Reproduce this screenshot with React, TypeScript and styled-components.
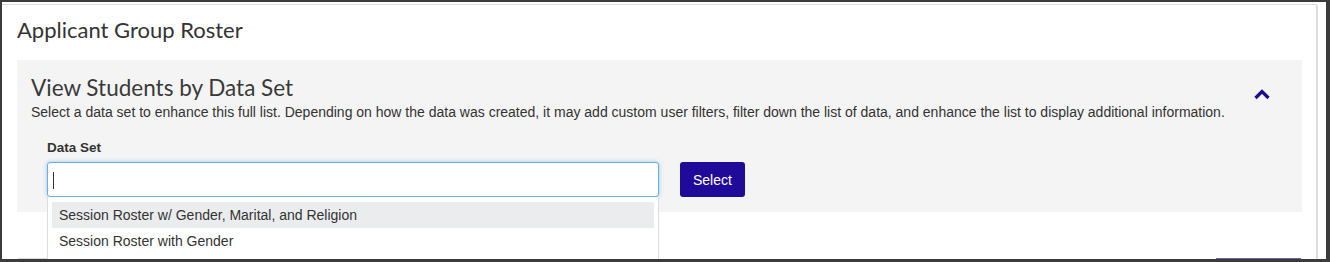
import React from "react";
import styled, { createGlobalStyle } from "styled-components";

const Global = createGlobalStyle`
  html, body { margin: 0; padding: 0; background: #3b3b3b; }
  body { font-family: "Liberation Sans", Arial, sans-serif; color: #333; }
`;

const Frame = styled.div`
  margin: 2px 4px 0 2px;
  height: 257px;
  background: #fff;
  overflow: hidden;
  padding-top: 2px;
  box-sizing: border-box;
`;

const Card = styled.section`
  width: 1316px;
  box-sizing: border-box;
  border-top: 1px solid #dcdcdc;
  border-right: 2px solid #dcdcdc;
  border-top-right-radius: 3px;
  padding: 10px 14px 0 15px;
  height: 300px;
`;

const Title = styled.h1`
  margin: 0;
  font-family: Lato, "Open Sans", sans-serif;
  font-weight: 400;
  font-size: 22px;
  line-height: 30px;
  color: #333;
`;

const Panel = styled.div`
  margin-top: 15px;
  background: #f4f4f4;
  padding: 13px 14px 15px 14px;
`;

const PanelHead = styled.div`
  display: flex;
  align-items: flex-start;
  justify-content: space-between;
`;

const PanelTitle = styled.h2`
  margin: 0;
  font-family: Lato, "Open Sans", sans-serif;
  font-weight: 400;
  font-size: 22.5px;
  line-height: 30px;
  color: #3a3a3a;
`;

const Toggle = styled.button`
  border: 0;
  background: none;
  padding: 0;
  margin: 16px 18px 0 0;
  width: 16px;
  height: 12px;
  display: flex;
  cursor: pointer;
`;

const Desc = styled.p`
  margin: 0;
  font-size: 14px;
  line-height: 18px;
  color: #333;
`;

const Group = styled.div`
  margin: 18px 0 0 16px;
`;

const Label = styled.label`
  display: block;
  font-weight: bold;
  font-size: 13.5px;
  line-height: 18px;
  color: #333;
  margin-bottom: 5px;
`;

const Row = styled.div`
  display: flex;
  align-items: center;
  gap: 21px;
`;

const ComboWrap = styled.div`
  position: relative;
  width: 612px;
`;

const Input = styled.div`
  box-sizing: border-box;
  height: 35px;
  border: 1px solid #66afe9;
  border-radius: 3px;
  background: #fff;
  box-shadow: 0 0 4px rgba(102, 175, 233, 0.6);
  padding: 9px 5px;
`;

const Caret = styled.span`
  display: block;
  width: 1px;
  height: 17px;
  background: #333;
`;

const Menu = styled.ul`
  position: absolute;
  top: 35px;
  left: 0;
  right: 0;
  margin: 0;
  padding: 5px 4px;
  list-style: none;
  background: #fff;
  border: 1px solid #ddd;
  border-top: 0;
  box-sizing: border-box;
  z-index: 2;
`;

const Option = styled.li<{ $active?: boolean }>`
  height: 26px;
  line-height: 26px;
  padding: 0 7px;
  font-size: 14px;
  color: #333;
  background: ${(p) => (p.$active ? "#ebeced" : "transparent")};
`;

const Button = styled.button`
  height: 35px;
  padding: 0 13px;
  border: 0;
  border-radius: 3px;
  background: #1f0a9a;
  color: #fff;
  font-family: "Liberation Sans", Arial, sans-serif;
  font-size: 14px;
`;

const Below = styled.div`
  display: flex;
  justify-content: space-between;
  margin-top: 46px;
`;

const GhostBox = styled.div`
  width: 32px;
  height: 30px;
  margin-left: 1px;
  border-top: 1px solid #d8d8d8;
`;

const PurpleBar = styled.div`
  width: 85px;
  height: 30px;
  margin-right: 1px;
  border-top: 2px solid #6b5fa8;
`;

export default function App() {
  return (
    <>
      <Global />
      <Frame>
        <Card>
          <Title>Applicant Group Roster</Title>
          <Panel>
            <PanelHead>
              <PanelTitle>View Students by Data Set</PanelTitle>
              <Toggle aria-label="Collapse">
                <svg width="16" height="11" viewBox="0 0 16 11">
                  <path d="M1.5 9 L8 2.5 L14.5 9" fill="none" stroke="#1b0c8f" strokeWidth="3.2" />
                </svg>
              </Toggle>
            </PanelHead>
            <Desc>
              Select a data set to enhance this full list. Depending on how the data was created, it may add custom user filters, filter down the list of data, and enhance the list to display additional information.
            </Desc>
            <Group>
              <Label>Data Set</Label>
              <Row>
                <ComboWrap>
                  <Input>
                    <Caret />
                  </Input>
                  <Menu>
                    <Option $active>Session Roster w/ Gender, Marital, and Religion</Option>
                    <Option>Session Roster with Gender</Option>
                  </Menu>
                </ComboWrap>
                <Button>Select</Button>
              </Row>
            </Group>
          </Panel>
          <Below>
            <GhostBox />
            <PurpleBar />
          </Below>
        </Card>
      </Frame>
    </>
  );
}
